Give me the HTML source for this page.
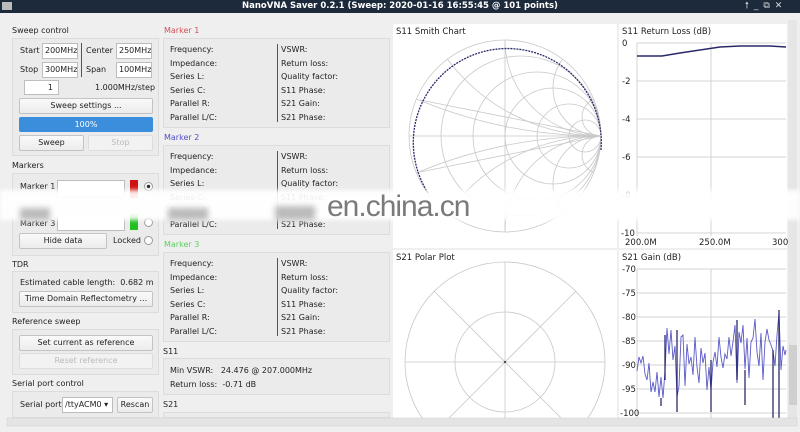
<!DOCTYPE html>
<html><head><meta charset="utf-8"><style>
*{box-sizing:border-box;margin:0;padding:0}
html,body{width:800px;height:432px;overflow:hidden}
body{background:#efefef;font-family:"DejaVu Sans","Liberation Sans",sans-serif;font-size:8px;color:#222;position:relative}
.a{position:absolute;white-space:nowrap}
.title{left:0;top:0;width:800px;height:13px;background:#1d2a3c;color:#fff;font-weight:bold;font-size:8.5px;text-align:center;line-height:13px}
.box{position:absolute;border:1px solid #dcdcdc;background:#ebebeb}
.in{position:absolute;background:#fff;border:1px solid #bdbdbd;line-height:14px;padding:0 2px;white-space:nowrap;overflow:hidden}
.btn{position:absolute;background:linear-gradient(#fafafa,#ececec);border:1px solid #c3c3c3;border-radius:2px;text-align:center;line-height:14px;white-space:nowrap;overflow:hidden}
.dis{color:#bbb;background:#f2f2f2;border-color:#ddd}
.vl{position:absolute;width:2px;background:#555}
.radio{position:absolute;width:9px;height:9px;border-radius:50%;border:1px solid #999;background:#fff}
</style></head><body>
<div class="a title">NanoVNA Saver 0.2.1 (Sweep: 2020-01-16 16:55:45 @ 101 points)</div>
<div class="a" style="left:2px;top:2px;width:10px;height:8px;background:#bbb"></div>
<div class="a" style="left:745px;top:0;width:55px;height:13px;color:#ddd;font-size:9px;letter-spacing:5px;line-height:13px">🠕_⧉✕</div>

<!-- left panel -->
<div class="a" style="left:12px;top:26px">Sweep control</div>
<div class="box" style="left:12px;top:38px;width:147px;height:118px"></div>
<div class="a" style="left:20px;top:46px">Start</div><div class="in" style="left:42px;top:43px;width:36px;height:16px">200MHz</div>
<div class="vl" style="left:81px;top:43px;height:34px;width:1px"></div>
<div class="a" style="left:86px;top:46px">Center</div><div class="in" style="left:116px;top:43px;width:36px;height:16px">250MHz</div>
<div class="a" style="left:20px;top:65px">Stop</div><div class="in" style="left:42px;top:62px;width:36px;height:16px">300MHz</div>
<div class="a" style="left:86px;top:65px">Span</div><div class="in" style="left:116px;top:62px;width:36px;height:16px">100MHz</div>
<div class="in" style="left:24px;top:80px;width:35px;height:15px;text-align:right;padding-right:5px">1</div>
<div class="a" style="left:95px;top:83px">1.000MHz/step</div>
<div class="btn" style="left:19px;top:98px;width:134px;height:16px">Sweep settings ...</div>
<div class="a" style="left:19px;top:117px;width:134px;height:15px;background:#3b8edb;border-radius:2px;color:#fff;text-align:center;line-height:15px">100%</div>
<div class="btn" style="left:19px;top:135px;width:65px;height:16px">Sweep</div>
<div class="btn dis" style="left:88px;top:135px;width:65px;height:16px">Stop</div>

<div class="a" style="left:12px;top:161px">Markers</div>
<div class="box" style="left:12px;top:173px;width:147px;height:83px"></div>
<div class="a" style="left:20px;top:182px">Marker 1</div>
<div class="in" style="left:57px;top:180px;width:68px;height:17px"></div>
<div class="a" style="left:130px;top:180px;width:8px;height:18px;background:#d01010"></div>
<div class="radio" style="left:144px;top:182px;background:radial-gradient(#222 30%,#fff 40%)"></div>
<div class="a" style="left:20px;top:219px">Marker 3</div>
<div class="in" style="left:57px;top:214px;width:68px;height:17px"></div>
<div class="a" style="left:130px;top:214px;width:8px;height:16px;background:#20c020"></div>
<div class="radio" style="left:144px;top:218px"></div>
<div class="btn" style="left:19px;top:233px;width:88px;height:16px">Hide data</div>
<div class="a" style="left:113px;top:236px">Locked</div><div class="radio" style="left:144px;top:236px"></div>

<div class="a" style="left:12px;top:260px">TDR</div>
<div class="box" style="left:12px;top:271px;width:147px;height:42px"></div>
<div class="a" style="left:20px;top:278px">Estimated cable length:&nbsp; 0.682 m</div>
<div class="btn" style="left:19px;top:291px;width:134px;height:16px">Time Domain Reflectometry ...</div>

<div class="a" style="left:12px;top:317px">Reference sweep</div>
<div class="box" style="left:12px;top:329px;width:147px;height:46px"></div>
<div class="btn" style="left:19px;top:335px;width:134px;height:16px">Set current as reference</div>
<div class="btn dis" style="left:19px;top:353px;width:134px;height:16px">Reset reference</div>

<div class="a" style="left:12px;top:379px">Serial port control</div>
<div class="box" style="left:12px;top:391px;width:147px;height:27px"></div>
<div class="a" style="left:20px;top:400px">Serial port</div>
<div class="in" style="left:62px;top:397px;width:51px;height:16px">/ttyACM0 ▾</div>
<div class="btn" style="left:117px;top:397px;width:36px;height:16px">Rescan</div>

<!-- middle panel -->
<div class="a" style="left:164px;top:26px;color:#d2525a">Marker 1</div>
<div class="box" style="left:163px;top:38px;width:227px;height:90px"></div>
<div class="a" style="left:170px;top:43px;line-height:13.6px">Frequency:<br>Impedance:<br>Series L:<br>Series C:<br>Parallel R:<br>Parallel L/C:</div>
<div class="vl" style="left:277px;top:44px;height:78px;width:1px"></div>
<div class="a" style="left:281px;top:43px;line-height:13.6px">VSWR:<br>Return loss:<br>Quality factor:<br>S11 Phase:<br>S21 Gain:<br>S21 Phase:</div>

<div class="a" style="left:164px;top:133px;color:#5050c8">Marker 2</div>
<div class="box" style="left:163px;top:145px;width:227px;height:90px"></div>
<div class="a" style="left:170px;top:150px;line-height:13.6px">Frequency:<br>Impedance:<br>Series L:<br>Series C:<br>Parallel R:<br>Parallel L/C:</div>
<div class="vl" style="left:277px;top:151px;height:78px;width:1px"></div>
<div class="a" style="left:281px;top:150px;line-height:13.6px">VSWR:<br>Return loss:<br>Quality factor:<br>S11 Phase:<br>S21 Gain:<br>S21 Phase:</div>

<div class="a" style="left:164px;top:240px;color:#5fd05f">Marker 3</div>
<div class="box" style="left:163px;top:252px;width:227px;height:90px"></div>
<div class="a" style="left:170px;top:257px;line-height:13.6px">Frequency:<br>Impedance:<br>Series L:<br>Series C:<br>Parallel R:<br>Parallel L/C:</div>
<div class="vl" style="left:277px;top:258px;height:78px;width:1px"></div>
<div class="a" style="left:281px;top:257px;line-height:13.6px">VSWR:<br>Return loss:<br>Quality factor:<br>S11 Phase:<br>S21 Gain:<br>S21 Phase:</div>

<div class="a" style="left:163px;top:347px">S11</div>
<div class="box" style="left:163px;top:358px;width:227px;height:37px"></div>
<div class="a" style="left:170px;top:364px;line-height:13.6px">Min VSWR:&nbsp;&nbsp; 24.476 @ 207.000MHz<br>Return loss:&nbsp; -0.71 dB</div>
<div class="a" style="left:163px;top:400px">S21</div>
<div class="box" style="left:163px;top:412px;width:227px;height:6px"></div>

<!-- charts -->
<svg class="a" style="left:0;top:0" width="800" height="432">
<defs>
<clipPath id="sc"><circle cx="505" cy="136" r="96"/></clipPath>
<clipPath id="pc"><rect x="393" y="250" width="224" height="168"/></clipPath>
</defs>
<rect x="393" y="24" width="224" height="224" fill="#fff"/>
<rect x="619" y="24" width="168" height="224" fill="#fff"/>
<rect x="393" y="250" width="224" height="168" fill="#fff"/>
<rect x="619" y="250" width="168" height="168" fill="#fff"/>
<g fill="none" stroke="#c8c8c8" stroke-width="0.8">
<circle cx="505" cy="136" r="96"/>
<g clip-path="url(#sc)">
<line x1="409" y1="136" x2="601" y2="136"/>
<circle cx="521" cy="136" r="80"/><circle cx="537" cy="136" r="64"/><circle cx="553" cy="136" r="48"/><circle cx="569" cy="136" r="32"/><circle cx="585" cy="136" r="16"/>
<circle cx="601" cy="-344" r="480"/><circle cx="601" cy="616" r="480"/>
<circle cx="601" cy="-56" r="192"/><circle cx="601" cy="328" r="192"/>
<circle cx="601" cy="40" r="96"/><circle cx="601" cy="232" r="96"/>
<circle cx="601" cy="88" r="48"/><circle cx="601" cy="184" r="48"/>
<circle cx="601" cy="117" r="19"/><circle cx="601" cy="155" r="19"/>
<line x1="505" y1="40" x2="505" y2="232"/>
<line x1="420" y1="100" x2="601" y2="136"/><line x1="420" y1="172" x2="601" y2="136"/>
</g>
<g clip-path="url(#pc)">
<circle cx="505" cy="362" r="100"/><circle cx="505" cy="362" r="50"/>
<line x1="405" y1="362" x2="605" y2="362"/><line x1="505" y1="262" x2="505" y2="462"/>
<line x1="434" y1="291" x2="576" y2="433"/><line x1="576" y1="291" x2="434" y2="433"/>
</g>
<line x1="637" y1="43" x2="786" y2="43"/><line x1="637" y1="81" x2="786" y2="81"/><line x1="637" y1="119" x2="786" y2="119"/><line x1="637" y1="157" x2="786" y2="157"/><line x1="637" y1="195" x2="786" y2="195"/><line x1="637" y1="233" x2="786" y2="233"/>
<line x1="637" y1="43" x2="637" y2="236"/><line x1="711" y1="43" x2="711" y2="236"/>
<line x1="637" y1="269" x2="786" y2="269"/><line x1="637" y1="293" x2="786" y2="293"/><line x1="637" y1="317" x2="786" y2="317"/><line x1="637" y1="341" x2="786" y2="341"/><line x1="637" y1="365" x2="786" y2="365"/><line x1="637" y1="389" x2="786" y2="389"/><line x1="637" y1="413" x2="786" y2="413"/>
<line x1="637" y1="269" x2="637" y2="418"/><line x1="711" y1="269" x2="711" y2="418"/>
</g>
<path d="M428 193 A94 94 0 1 1 601 150" fill="none" stroke="#2a2a6a" stroke-width="1.3" stroke-dasharray="2 1"/>
<circle cx="505" cy="362" r="1" fill="#222"/>
<path d="M637 56 L662 56 L680 53 L700 50 L720 47 L740 46 L770 46 L786 47" fill="none" stroke="#2a2a6a" stroke-width="1.5"/>
<polyline fill="none" stroke="#5a5ac8" stroke-width="0.9" points="637,371 639,357 641,363 643,356 645,374 647,380 649,363 651,392 653,382 655,392 657,372 659,397 661,377 663,398 665,371 667,328 669,354 671,330 673,360 675,346 677,397 679,386 681,337 683,335 685,386 687,344 689,364 691,357 693,375 695,337 697,367 699,383 701,348 703,363 705,353 707,390 709,367 711,390 713,362 715,352 717,367 719,337 721,357 723,368 725,354 727,359 729,337 731,356 733,342 735,325 737,383 739,332 741,343 743,325 745,369 747,338 749,378 751,342 753,338 755,319 757,352 759,366 761,333 763,380 765,342 767,329 769,340 771,345 773,351 775,366 777,335 779,313 781,370 783,346 785,355 786,350"/>
<g stroke="#1a1a5a" stroke-width="1.2"><line x1="661" y1="398" x2="661" y2="406"/><line x1="677" y1="330" x2="677" y2="412"/><line x1="711" y1="360" x2="711" y2="412"/><line x1="737" y1="320" x2="737" y2="380"/><line x1="779" y1="310" x2="779" y2="418"/><line x1="773" y1="350" x2="773" y2="418"/><line x1="745" y1="370" x2="745" y2="405"/><line x1="665" y1="335" x2="665" y2="380"/></g>
<g font-family="DejaVu Sans,Liberation Sans,sans-serif" font-size="8.5" fill="#222">
<text x="396" y="34">S11 Smith Chart</text><text x="622" y="34">S11 Return Loss (dB)</text>
<text x="396" y="260">S21 Polar Plot</text><text x="622" y="260">S21 Gain (dB)</text>
<text x="622" y="46">0</text><text x="622" y="84">-2</text><text x="622" y="122">-4</text><text x="622" y="160">-6</text><text x="622" y="198">-8</text><text x="621" y="236">-10</text>
<text x="625" y="245">200.0M</text><text x="699" y="245">250.0M</text><text x="772" y="245">300</text>
<text x="622" y="272">-70</text><text x="622" y="296">-75</text><text x="622" y="320">-80</text><text x="622" y="344">-85</text><text x="622" y="368">-90</text><text x="622" y="392">-95</text><text x="620" y="416">-100</text>
</g>
<rect x="788" y="20" width="9" height="400" fill="#e6e6e6"/>
<rect x="789" y="345" width="8" height="60" fill="#cfcfcf"/>
<rect x="7" y="418" width="790" height="8" fill="#e4e4e4" stroke="#cfcfcf" stroke-width="0.5"/>
</svg>

<!-- watermark band -->
<div class="a" style="left:0;top:190px;width:800px;height:30px;background:rgba(255,255,255,0.93);filter:blur(2px)"></div>
<div class="a" style="left:20px;top:208px;width:30px;height:12px;background:#bbb;filter:blur(3px)"></div>
<div class="a" style="left:168px;top:208px;width:40px;height:12px;background:#bbb;filter:blur(3px)"></div>
<div class="a" style="left:275px;top:206px;width:40px;height:14px;background:#bbb;filter:blur(3px)"></div>
<div class="a" style="left:327px;top:190px;font-family:'Liberation Sans Narrow','Liberation Sans',sans-serif;font-size:30px;color:#7a7a7a;letter-spacing:-1px">en.china.cn</div>
</body></html>
